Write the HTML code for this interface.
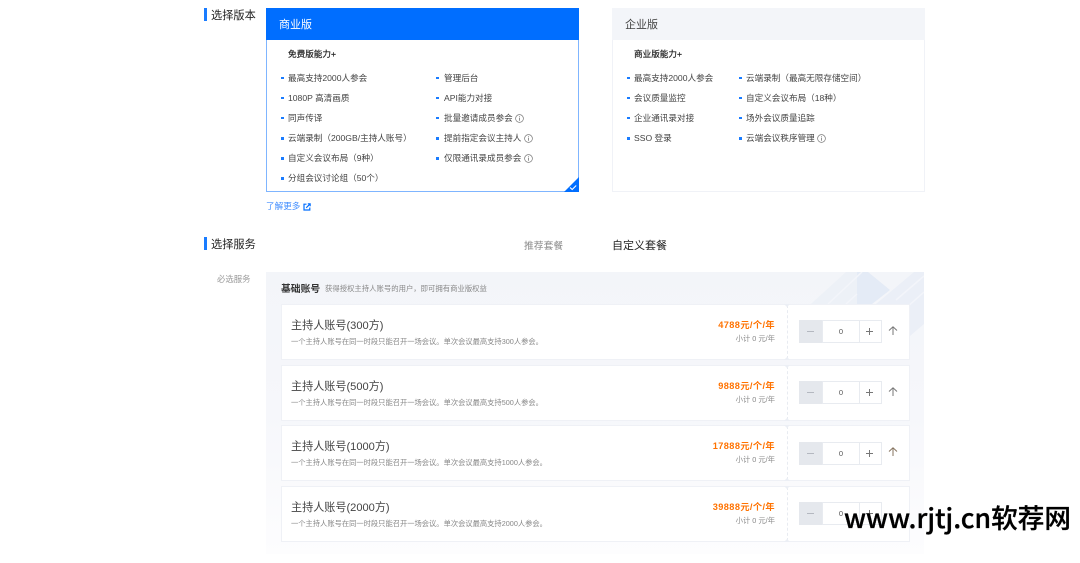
<!DOCTYPE html>
<html lang="zh">
<head>
<meta charset="utf-8">
<style>
html,body{margin:0;padding:0;background:#fff}
body{width:1080px;height:563px;overflow:hidden;position:relative;font-family:"Liberation Sans","Noto Sans CJK SC",sans-serif;color:#333}
#w{position:absolute;left:0;top:0;width:1080px;height:563px;filter:blur(.3px)}
.t{position:absolute;white-space:nowrap;line-height:1}
.box{position:absolute;box-sizing:border-box}
.f{font-size:8.6px;color:#444}
.b{color:#222;-webkit-text-stroke:.2px #222}
.dot{position:absolute;width:2.5px;height:2.5px;background:#1a7cff}
.h{font-size:11.2px;color:#222}
.title{font-size:11.1px;color:#444}
.desc{font-size:7.27px;color:#888}
.price{font-size:9.2px;font-weight:bold;color:#ff7200;letter-spacing:.4px}
.sub{font-size:7.3px;color:#888}
.row{position:absolute;left:281px;width:629px;height:56px;background:#fff;border:1px solid #eff1f6;box-sizing:border-box}
.row i{position:absolute;left:505px;top:0;bottom:0;border-left:1px dashed #e8ebf1}
.row i:before{content:"";position:absolute;left:-4px;top:-1px;border:3px solid transparent;border-top-color:#eceff5}
.row i:after{content:"";position:absolute;left:-4px;bottom:-1px;border:3px solid transparent;border-bottom-color:#eceff5}
.min{position:absolute;left:799px;width:23px;height:23px;background:#e5e8ed}
.min:after{content:"";position:absolute;left:8px;top:11px;width:7px;height:1px;background:#b4b8c0}
.num{position:absolute;left:822px;width:38px;height:23px;box-sizing:border-box;border:1px solid #e8ebf0;background:#fff;font-size:7.5px;line-height:21px;text-align:center;color:#555}
.pl{position:absolute;left:859px;width:23px;height:23px;box-sizing:border-box;border:1px solid #e8ebf0;background:#fff}
.pl:before{content:"";position:absolute;left:6px;top:10px;width:7px;height:1px;background:#777}
.pl:after{content:"";position:absolute;left:9px;top:7px;width:1px;height:7px;background:#777}
svg{position:absolute;overflow:visible}
</style>
</head>
<body>
<div id="w">
<!-- section heading 1 -->
<div class="box" style="left:204px;top:8px;width:3px;height:13px;background:#1a7cff"></div>
<div class="t h" style="left:211px;top:10.500px">选择版本</div>

<!-- Business card -->
<div class="box" style="left:266px;top:8px;width:313px;height:184px;border:1px solid #7fb5ff;background:#fff"></div>
<div class="box" style="left:266px;top:8px;width:313px;height:32px;background:#006eff"></div>
<div class="t" style="left:279px;top:19.500px;font-size:11px;color:#fff">商业版</div>
<div class="t f b" style="left:288px;top:50px">免费版能力+</div>

<div class="dot" style="left:281px;top:76.500px"></div><div class="t f" style="left:288px;top:73.500px">最高支持2000人参会</div>
<div class="dot" style="left:281px;top:96.500px"></div><div class="t f" style="left:288px;top:93.500px">1080P 高清画质</div>
<div class="dot" style="left:281px;top:116.500px"></div><div class="t f" style="left:288px;top:113.500px">同声传译</div>
<div class="dot" style="left:281px;top:137px"></div><div class="t f" style="left:288px;top:134px">云端录制（200GB/主持人账号）</div>
<div class="dot" style="left:281px;top:157px"></div><div class="t f" style="left:288px;top:154px">自定义会议布局（9种）</div>
<div class="dot" style="left:281px;top:177px"></div><div class="t f" style="left:288px;top:174px">分组会议讨论组（50个）</div>

<div class="dot" style="left:436px;top:76.500px"></div><div class="t f" style="left:444px;top:73.500px">管理后台</div>
<div class="dot" style="left:436px;top:96.500px"></div><div class="t f" style="left:444px;top:93.500px">API能力对接</div>
<div class="dot" style="left:436px;top:116.500px"></div><div class="t f" style="left:444px;top:113.500px">批量邀请成员参会</div>
<div class="dot" style="left:436px;top:137px"></div><div class="t f" style="left:444px;top:134px">提前指定会议主持人</div>
<div class="dot" style="left:436px;top:157px"></div><div class="t f" style="left:444px;top:154px">仅限通讯录成员参会</div>

<svg style="left:515px;top:113.500px" width="9" height="9" viewBox="0 0 9 9"><circle cx="4.5" cy="4.5" r="3.9" fill="none" stroke="#777" stroke-width=".7"/><path d="M4.5 2.2v.9M4.5 3.8v3" stroke="#777" stroke-width=".8"/></svg>
<svg style="left:524px;top:134px" width="9" height="9" viewBox="0 0 9 9"><circle cx="4.5" cy="4.5" r="3.9" fill="none" stroke="#777" stroke-width=".7"/><path d="M4.5 2.2v.9M4.5 3.8v3" stroke="#777" stroke-width=".8"/></svg>
<svg style="left:524px;top:154px" width="9" height="9" viewBox="0 0 9 9"><circle cx="4.5" cy="4.5" r="3.9" fill="none" stroke="#777" stroke-width=".7"/><path d="M4.5 2.2v.9M4.5 3.8v3" stroke="#777" stroke-width=".8"/></svg>

<svg style="left:564px;top:177px" width="15" height="15" viewBox="0 0 15 15"><path d="M15 0V15H0Z" fill="#006eff"/><path d="M6 10.5l2.2 2 4-4" fill="none" stroke="#fff" stroke-width="1.1"/></svg>

<div class="t" style="left:266px;top:202px;font-size:8.6px;color:#3f8cff">了解更多</div>
<svg style="left:303px;top:202.500px" width="8" height="8" viewBox="0 0 8 8"><path d="M3.500 1.200H1V7H6.800V4.500" fill="none" stroke="#006eff" stroke-width="1.200"/><path d="M3.200 4.800L6.800 1.200M4.800 .8H7.200V3.200" fill="none" stroke="#006eff" stroke-width="1.100"/></svg>

<!-- Enterprise card -->
<div class="box" style="left:612px;top:8px;width:313px;height:184px;border:1px solid #f0f2f7;background:#fff"></div>
<div class="box" style="left:612px;top:8px;width:313px;height:32px;background:#f3f5f9"></div>
<div class="t" style="left:625px;top:19.500px;font-size:11px;color:#444">企业版</div>
<div class="t f b" style="left:634px;top:50px">商业版能力+</div>

<div class="dot" style="left:627px;top:76.500px"></div><div class="t f" style="left:634px;top:73.500px">最高支持2000人参会</div>
<div class="dot" style="left:627px;top:96.500px"></div><div class="t f" style="left:634px;top:93.500px">会议质量监控</div>
<div class="dot" style="left:627px;top:116.500px"></div><div class="t f" style="left:634px;top:113.500px">企业通讯录对接</div>
<div class="dot" style="left:627px;top:137px"></div><div class="t f" style="left:634px;top:134px">SSO 登录</div>

<div class="dot" style="left:739px;top:76.500px"></div><div class="t f" style="left:746px;top:73.500px">云端录制（最高无限存储空间）</div>
<div class="dot" style="left:739px;top:96.500px"></div><div class="t f" style="left:746px;top:93.500px">自定义会议布局（18种）</div>
<div class="dot" style="left:739px;top:116.500px"></div><div class="t f" style="left:746px;top:113.500px">场外会议质量追踪</div>
<div class="dot" style="left:739px;top:137px"></div><div class="t f" style="left:746px;top:134px">云端会议秩序管理</div>
<svg style="left:817px;top:134px" width="9" height="9" viewBox="0 0 9 9"><circle cx="4.5" cy="4.5" r="3.9" fill="none" stroke="#777" stroke-width=".7"/><path d="M4.5 2.2v.9M4.5 3.8v3" stroke="#777" stroke-width=".8"/></svg>

<!-- section heading 2 -->
<div class="box" style="left:204px;top:237px;width:3px;height:13px;background:#1a7cff"></div>
<div class="t h" style="left:211px;top:239.500px">选择服务</div>
<div class="t" style="left:524px;top:241.500px;font-size:9.8px;color:#8a8a8a">推荐套餐</div>
<div class="t" style="left:612px;top:240.500px;font-size:11px;color:#222">自定义套餐</div>
<div class="t" style="left:217px;top:275px;font-size:8.4px;color:#999">必选服务</div>

<!-- panel -->
<div class="box" style="left:266px;top:272px;width:658px;height:282px;background:linear-gradient(180deg,#f3f5f9 0%,#f6f7fb 50%,#fdfdfe 100%);overflow:hidden">
  <svg style="left:0;top:0" width="658" height="282" viewBox="0 0 658 282">
    <path d="M545 32L580 0H591V32Z" fill="#edf1f7"/>
    <path d="M591 0H602L624 18L606 32H591Z" fill="#e4ebf6"/>
    <path d="M610 32L648 0H658V52L644 64L620 36Z" fill="#ebeff7"/>
    <path d="M562 32L596 0M580 32L591 22M630 28L658 4M640 36L658 20" stroke="#f3f5fa" stroke-width="1.500" fill="none"/>
  </svg>
</div>
<div class="t" style="left:281px;top:284.500px;font-size:9.8px;font-weight:bold;color:#333">基础账号</div>
<div class="t" style="left:325px;top:284.500px;font-size:7.36px;color:#888">获得授权主持人账号的用户，即可拥有商业版权益</div>

<!-- rows -->
<div class="row" style="top:304px"><i></i></div>
<div class="t title" style="left:291px;top:320.500px">主持人账号(300方)</div>
<div class="t desc" style="left:291px;top:338px">一个主持人账号在同一时段只能召开一场会议。单次会议最高支持300人参会。</div>
<div class="t price" style="right:305px;top:320.500px">4788元/个/年</div>
<div class="t sub" style="right:305px;top:335px">小计 0 元/年</div>
<div class="min" style="top:320px"></div><div class="num" style="top:320px">0</div><div class="pl" style="top:320px"></div>
<svg style="left:888px;top:326px" width="10" height="10" viewBox="0 0 10 10"><path d="M1 4.500L5 .8L9 4.500M5 1V9" fill="none" stroke="#777" stroke-width="1"/></svg>

<div class="row" style="top:365px"><i></i></div>
<div class="t title" style="left:291px;top:381.500px">主持人账号(500方)</div>
<div class="t desc" style="left:291px;top:398.500px">一个主持人账号在同一时段只能召开一场会议。单次会议最高支持500人参会。</div>
<div class="t price" style="right:305px;top:381.500px">9888元/个/年</div>
<div class="t sub" style="right:305px;top:396px">小计 0 元/年</div>
<div class="min" style="top:381px"></div><div class="num" style="top:381px">0</div><div class="pl" style="top:381px"></div>
<svg style="left:888px;top:387px" width="10" height="10" viewBox="0 0 10 10"><path d="M1 4.500L5 .8L9 4.500M5 1V9" fill="none" stroke="#777" stroke-width="1"/></svg>

<div class="row" style="top:425px"><i></i></div>
<div class="t title" style="left:291px;top:442px">主持人账号(1000方)</div>
<div class="t desc" style="left:291px;top:459px">一个主持人账号在同一时段只能召开一场会议。单次会议最高支持1000人参会。</div>
<div class="t price" style="right:305px;top:442px">17888元/个/年</div>
<div class="t sub" style="right:305px;top:456px">小计 0 元/年</div>
<div class="min" style="top:442px"></div><div class="num" style="top:442px">0</div><div class="pl" style="top:442px"></div>
<svg style="left:888px;top:447px" width="10" height="10" viewBox="0 0 10 10"><path d="M1 4.500L5 .8L9 4.500M5 1V9" fill="none" stroke="#85735f" stroke-width="1"/></svg>

<div class="row" style="top:486px"><i></i></div>
<div class="t title" style="left:291px;top:502.500px">主持人账号(2000方)</div>
<div class="t desc" style="left:291px;top:520px">一个主持人账号在同一时段只能召开一场会议。单次会议最高支持2000人参会。</div>
<div class="t price" style="right:305px;top:502.500px">39888元/个/年</div>
<div class="t sub" style="right:305px;top:517px">小计 0 元/年</div>
<div class="min" style="top:502px"></div><div class="num" style="top:502px">0</div><div class="pl" style="top:502px"></div>
</div>

<!-- watermark -->
<div class="t" style="left:844px;top:501.500px;font-family:'Noto Sans CJK SC',sans-serif;font-size:26.6px;font-weight:500;color:#000;line-height:30px;-webkit-text-stroke:.3px #000">www.rjtj.cn软荐网</div>
</body>
</html>
